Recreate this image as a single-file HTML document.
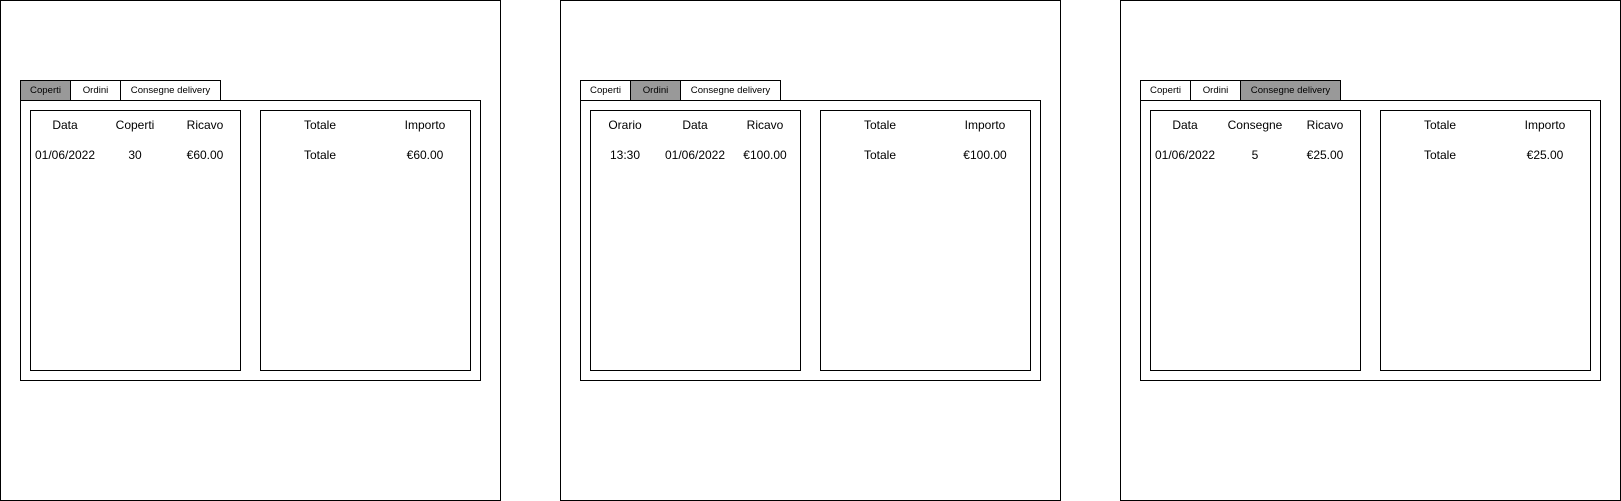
<!DOCTYPE html>
<html><head><meta charset="utf-8"><style>
*{box-sizing:border-box;margin:0;padding:0}
body{width:1621px;height:501px;background:#fff;position:relative;overflow:hidden;font-family:"Liberation Sans",Arial,sans-serif;color:#000}
.p{position:absolute;top:0;width:501px;height:501px;border:1px solid #000}
.b{position:absolute;border:1px solid #000}
.tab{position:absolute;top:80px;height:21px;border:1px solid #000;font-size:9.6px;line-height:20px;text-align:center;background:#fff}
.on{background:#999}
.t{position:absolute;font-size:12px;width:100px;margin-left:-50px;text-align:center;line-height:14px}
</style></head><body>

<div class="p" style="left:0"></div>
<div class="b" style="left:20px;top:100px;width:461px;height:281px"></div>
<div class="tab on" style="left:20px;width:51px">Coperti</div>
<div class="tab" style="left:70px;width:51px">Ordini</div>
<div class="tab" style="left:120px;width:101px">Consegne delivery</div>
<div class="b" style="left:30px;top:110px;width:211px;height:261px"></div>
<div class="b" style="left:260px;top:110px;width:211px;height:261px"></div>
<div class="t" style="left:65px;top:118px">Data</div>
<div class="t" style="left:135px;top:118px">Coperti</div>
<div class="t" style="left:205px;top:118px">Ricavo</div>
<div class="t" style="left:65px;top:148px">01/06/2022</div>
<div class="t" style="left:135px;top:148px">30</div>
<div class="t" style="left:205px;top:148px">€60.00</div>
<div class="t" style="left:320px;top:118px">Totale</div>
<div class="t" style="left:425px;top:118px">Importo</div>
<div class="t" style="left:320px;top:148px">Totale</div>
<div class="t" style="left:425px;top:148px">€60.00</div>

<div class="p" style="left:560px"></div>
<div class="b" style="left:580px;top:100px;width:461px;height:281px"></div>
<div class="tab" style="left:580px;width:51px">Coperti</div>
<div class="tab on" style="left:630px;width:51px">Ordini</div>
<div class="tab" style="left:680px;width:101px">Consegne delivery</div>
<div class="b" style="left:590px;top:110px;width:211px;height:261px"></div>
<div class="b" style="left:820px;top:110px;width:211px;height:261px"></div>
<div class="t" style="left:625px;top:118px">Orario</div>
<div class="t" style="left:695px;top:118px">Data</div>
<div class="t" style="left:765px;top:118px">Ricavo</div>
<div class="t" style="left:625px;top:148px">13:30</div>
<div class="t" style="left:695px;top:148px">01/06/2022</div>
<div class="t" style="left:765px;top:148px">€100.00</div>
<div class="t" style="left:880px;top:118px">Totale</div>
<div class="t" style="left:985px;top:118px">Importo</div>
<div class="t" style="left:880px;top:148px">Totale</div>
<div class="t" style="left:985px;top:148px">€100.00</div>

<div class="p" style="left:1120px"></div>
<div class="b" style="left:1140px;top:100px;width:461px;height:281px"></div>
<div class="tab" style="left:1140px;width:51px">Coperti</div>
<div class="tab" style="left:1190px;width:51px">Ordini</div>
<div class="tab on" style="left:1240px;width:101px">Consegne delivery</div>
<div class="b" style="left:1150px;top:110px;width:211px;height:261px"></div>
<div class="b" style="left:1380px;top:110px;width:211px;height:261px"></div>
<div class="t" style="left:1185px;top:118px">Data</div>
<div class="t" style="left:1255px;top:118px">Consegne</div>
<div class="t" style="left:1325px;top:118px">Ricavo</div>
<div class="t" style="left:1185px;top:148px">01/06/2022</div>
<div class="t" style="left:1255px;top:148px">5</div>
<div class="t" style="left:1325px;top:148px">€25.00</div>
<div class="t" style="left:1440px;top:118px">Totale</div>
<div class="t" style="left:1545px;top:118px">Importo</div>
<div class="t" style="left:1440px;top:148px">Totale</div>
<div class="t" style="left:1545px;top:148px">€25.00</div>

</body></html>
